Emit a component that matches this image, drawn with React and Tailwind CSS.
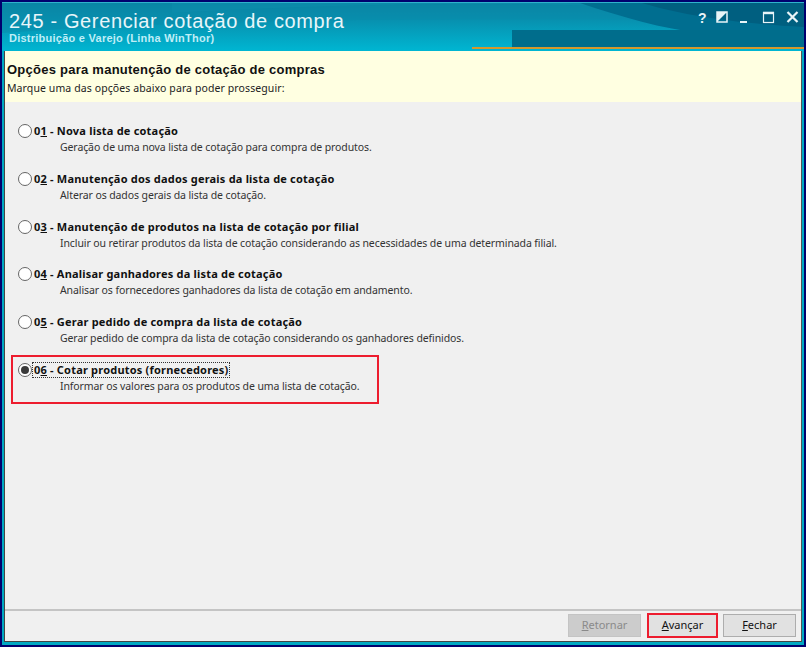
import React from "react";

const options = [
  { num: "0", key: "1", title: "Nova lista de cotação", desc: "Geração de uma nova lista de cotação para compra de produtos." },
  { num: "0", key: "2", title: "Manutenção dos dados gerais da lista de cotação", desc: "Alterar os dados gerais da lista de cotação." },
  { num: "0", key: "3", title: "Manutenção de produtos na lista de cotação por filial", desc: "Incluir ou retirar produtos da lista de cotação considerando as necessidades de uma determinada filial." },
  { num: "0", key: "4", title: "Analisar ganhadores da lista de cotação", desc: "Analisar os fornecedores ganhadores da lista de cotação em andamento." },
  { num: "0", key: "5", title: "Gerar pedido de compra da lista de cotação", desc: "Gerar pedido de compra da lista de cotação considerando os ganhadores definidos." },
  { num: "0", key: "6", title: "Cotar produtos (fornecedores)", desc: "Informar os valores para os produtos de uma lista de cotação.", selected: true },
];

function Radio({ checked }) {
  return (
    <span className="w-[14px] h-[14px] shrink-0 rounded-full border border-[#666] bg-white flex items-center justify-center">
      {checked && <span className="w-[8px] h-[8px] rounded-full bg-[#3a3a3a]" />}
    </span>
  );
}

function Option({ opt }) {
  return (
    <div className="relative h-[47.8px] pl-[13px] pt-[1px]">
      {opt.selected && (
        <div className="absolute left-[6px] top-[-6px] w-[368px] h-[49px] border-[2.5px] border-[#ed1c2e]" />
      )}
      <div className="flex items-center gap-[1px] h-[16px]">
        <Radio checked={opt.selected} />
        <span
          className={`font-bold text-[11px] tracking-[0.2px] leading-[14px] text-[#111] px-[1px] whitespace-nowrap ${
            opt.selected ? "outline-1 outline-dotted outline-[#333]" : ""
          }`}
        >
          {opt.num}
          <span className="underline">{opt.key}</span> - {opt.title}
        </span>
      </div>
      <div className="pl-[42px] h-[16px] leading-[16px] text-[10.5px] tracking-[-0.1px] text-[#333] whitespace-nowrap">{opt.desc}</div>
    </div>
  );
}

function WindowIcons() {
  return (
    <svg width="110" height="16" viewBox="0 0 110 16" className="text-[#e8f4f8]" fill="none">
      <text x="0" y="13" fontSize="14" fontWeight="700" fontFamily="Liberation Sans" fill="currentColor">?</text>
      <rect x="19" y="2" width="10" height="10" stroke="currentColor" strokeWidth="1.5" />
      <path d="M19 2 H29 L19 12 Z" fill="currentColor" />
      <path d="M42 12 H49" stroke="currentColor" strokeWidth="2" />
      <rect x="65.5" y="2.5" width="10" height="10" stroke="currentColor" strokeWidth="1.2" />
      <path d="M65 3 H76" stroke="currentColor" strokeWidth="2.4" />
      <path d="M89.5 2 L99.5 12 M99.5 2 L89.5 12" stroke="currentColor" strokeWidth="2.2" />
    </svg>
  );
}

function Button({ children, disabled, highlight, className }) {
  return (
    <div
      className={`flex items-center justify-center text-[11px] ${className} ${
        disabled
          ? "w-[73px] h-[23px] bg-[#cccccc] border border-[#c4c4c4] text-[#8a8a8a]"
          : highlight
          ? "w-[71px] h-[25px] -mt-[1px] bg-[#e1e1e1] border-[2.5px] border-[#ed1c2e] text-[#111]"
          : "w-[73px] h-[23px] bg-[#e1e1e1] border border-[#adadad] text-[#111]"
      }`}
    >
      {children}
    </div>
  );
}

export default function App() {
  return (
    <div className="w-[806px] h-[647px] bg-[#00006e] p-[2px] font-['Noto_Sans','Liberation_Sans',sans-serif]">
      <div className="relative w-full h-full bg-[#00a8c2] border-t border-[#2fb2cc] flex flex-col overflow-hidden">
        {/* swooshes behind the title */}
        <svg className="absolute left-0 top-0" width="802" height="48" viewBox="0 0 802 48">
          <path d="M0 0 H802 V48 H0 Z" fill="url(#bg)" />
          <path d="M0 30 C200 16 420 14 802 18 V0 H0 Z" fill="#0a8cab" opacity="0.55" />
          <path d="M170 10 C300 2 480 -2 640 4 C600 0 560 0 540 0 H170 Z" fill="#0f8fae" opacity="0.4" />
          <path d="M578 0 C620 14 660 26 700 30 H802 V0 Z" fill="#006e90" />
          <path d="M640 0 C680 12 730 20 802 24 V0 Z" fill="#005f80" />
          <defs>
            <linearGradient id="bg" x1="0" y1="0" x2="0" y2="1">
              <stop offset="0" stopColor="#0b7c9c" />
              <stop offset="1" stopColor="#00b6d2" />
            </linearGradient>
          </defs>
        </svg>

        <div className="relative h-[47px] shrink-0 pl-[7px]">
          <div className="font-['Liberation_Sans'] text-[20px] leading-[24px] pt-[6px] h-[30px] text-[#e8f6fa] tracking-[0.63px] whitespace-nowrap">
            245 - Gerenciar cotação de compra
          </div>
          <div className="font-['Liberation_Sans'] font-bold text-[11px] tracking-[0.25px] leading-[13px] mt-[-1px] text-[#bfeef7] whitespace-nowrap">
            Distribuição e Varejo (Linha WinThor)
          </div>
          <div className="absolute right-[-4px] top-[7px]">
            <WindowIcons />
          </div>
          <div className="absolute left-[510px] right-0 top-[27px] h-[17px] bg-[#006d8c]" />
          <div className="absolute left-[470px] right-0 top-[44px] h-[2px] bg-[#d4982c]" />
        </div>

        <div className="flex-1 mx-[2px] mb-[3px] border border-[#444] border-r-[#555] bg-[#f0f0f0] flex flex-col min-h-0">
          <div className="h-[51px] shrink-0 bg-[#ffffe1] pl-[2px] pt-[11px]">
            <div className="font-['Liberation_Sans'] font-bold text-[13px] tracking-[0.25px] leading-[16px] text-[#111]">
              Opções para manutenção de cotação de compras
            </div>
            <div className="text-[10.5px] tracking-[0.1px] leading-[14px] mt-[3px] text-[#222] whitespace-nowrap">
              Marque uma das opções abaixo para poder prosseguir:
            </div>
          </div>

          <div className="flex-1 pt-[20px]">
            {options.map((o) => (
              <Option key={o.key} opt={o} />
            ))}
          </div>

          <div className="h-[32px] shrink-0 border-t-2 border-[#c4c4c4] flex items-start justify-end pt-[3px] pr-[5px]">
            <Button disabled className="mr-[6px]">
              <span><span className="underline">R</span>etornar</span>
            </Button>
            <Button highlight className="mr-[5px]">
              <span><span className="underline">A</span>vançar</span>
            </Button>
            <Button>
              <span><span className="underline">F</span>echar</span>
            </Button>
          </div>
        </div>
      </div>
    </div>
  );
}
